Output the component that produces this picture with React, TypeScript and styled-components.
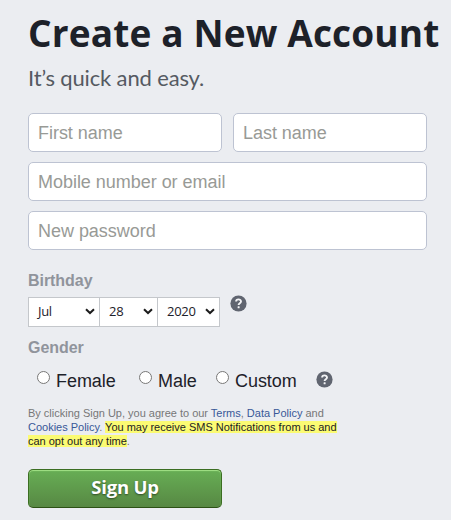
import React from "react";
import styled, { createGlobalStyle } from "styled-components";

const GlobalStyle = createGlobalStyle`
  * { box-sizing: border-box; }
  body { margin: 0; background: #ebedf1; }
`;

const Page = styled.main`
  width: 451px;
  height: 520px;
  overflow: hidden;
  padding: 8px 0 0 28px;
  background: #ebedf1;
  font-family: "Liberation Sans", Arial, sans-serif;
`;

const Title = styled.h1`
  margin: 0;
  height: 52px;
  font: 700 37px/50px "Open Sans", sans-serif;
  letter-spacing: 0.15px;
  color: #1d2129;
  white-space: nowrap;
`;

const Subtitle = styled.p`
  margin: 0;
  height: 53px;
  font: 400 22px/36px Lato, sans-serif;
  letter-spacing: -0.15px;
  color: #555a62;
  white-space: nowrap;
`;

const Fields = styled.div`
  display: grid;
  grid-template-columns: 194px 194px;
  gap: 10px 11px;
  width: 399px;
`;

const Field = styled.input<{ $wide?: boolean }>`
  grid-column: ${(p) => (p.$wide ? "1 / -1" : "auto")};
  width: 100%;
  height: 39px;
  margin: 0;
  padding: 2px 9px 0;
  border: 1px solid #bdc3d2;
  border-radius: 5px;
  background: #fff;
  font: 18px "Liberation Sans", Arial, sans-serif;
  letter-spacing: -0.03px;
  outline: none;
  &::placeholder { color: #989a96; opacity: 1; }
`;

const Label = styled.div<{ $top: number }>`
  margin-top: ${(p) => p.$top}px;
  height: 20px;
  font-size: 16px;
  line-height: 20px;
  letter-spacing: -0.05px;
  font-weight: 700;
  color: #90949c;
`;

const DateRow = styled.div`
  display: flex;
  margin-top: 6px;
  height: 30px;
`;

const DateSelect = styled.button<{ $width: number }>`
  display: flex;
  align-items: center;
  justify-content: space-between;
  width: ${(p) => p.$width}px;
  height: 30px;
  margin: 0 -1px 0 0;
  padding: 0 4px 1px 9px;
  border: 1px solid #c4c7cb;
  border-radius: 0;
  background: #fff;
  color: #1d2129;
  font: 13px/18px "Open Sans", sans-serif;
  letter-spacing: -0.3px;
`;

const HelpMark = styled.svg<{ $left: number; $top: number }>`
  flex: none;
  width: 17px;
  height: 17px;
  margin: ${(p) => p.$top}px 0 0 ${(p) => p.$left}px;
`;

const GenderRow = styled.div`
  display: flex;
  height: 37px;
  padding: 10px 0 0 9px;
`;

const Option = styled.label<{ $width: number }>`
  display: flex;
  width: ${(p) => p.$width}px;
  font-size: 18px;
  line-height: 26px;
  letter-spacing: -0.05px;
  color: #1d2129;
`;

const Radio = styled.input`
  flex: none;
  width: 13px;
  height: 13px;
  margin: 3px 6px 0 0;
`;

const Legal = styled.p`
  margin: 11px 0 0;
  width: 330px;
  font-size: 11px;
  line-height: 14px;
  letter-spacing: -0.01px;
  color: #777;
  white-space: nowrap;
`;

const Link = styled.a`
  color: #385898;
`;

const Highlight = styled.mark`
  background: #fbfb73;
  color: #222;
`;

const SubmitButton = styled.button`
  display: block;
  width: 194px;
  height: 39px;
  margin: 21px 0 0;
  padding: 0 0 3px;
  border: 1px solid #3b6e22;
  border-bottom-color: #2c5115;
  border-radius: 5px;
  background: linear-gradient(#67ae55, #578843);
  box-shadow: inset 0 1px 1px #a4e388;
  color: #fff;
  font: 700 18.5px/34px "Open Sans", sans-serif;
  letter-spacing: -0.2px;
  text-shadow: 0 1px 2px rgba(0, 0, 0, 0.5);
`;

const SelectValue = styled.span`
  padding-bottom: 1px;
`;

function Chevron() {
  return (
    <svg width="10" height="7" viewBox="0 0 10 7" fill="none">
      <path d="M1 1.2 L5 5 L9 1.2" stroke="#1c1c1c" strokeWidth="2" />
    </svg>
  );
}

function Help({ left, top }: { left: number; top: number }) {
  return (
    <HelpMark $left={left} $top={top} viewBox="0 0 17 17">
      <circle cx="8.5" cy="8.5" r="8.1" fill="#606570" />
      <path
        d="M6.1 6.6 C6.1 3.7 11 3.7 11 6.5 C11 8.3 8.6 8.2 8.6 10.1"
        fill="none"
        stroke="#f3f4f6"
        strokeWidth="1.9"
      />
      <rect x="7.6" y="11.2" width="2" height="2" rx=".5" fill="#f3f4f6" />
    </HelpMark>
  );
}

export default function App() {
  return (
    <>
      <GlobalStyle />
      <Page>
        <Title>Create a New Account</Title>
        <Subtitle>It’s quick and easy.</Subtitle>
        <Fields>
          <Field placeholder="First name" />
          <Field placeholder="Last name" />
          <Field $wide placeholder="Mobile number or email" />
          <Field $wide placeholder="New password" />
        </Fields>
        <Label $top={21}>Birthday</Label>
        <DateRow>
          <DateSelect $width={72}><SelectValue>Jul</SelectValue><Chevron /></DateSelect>
          <DateSelect $width={59}><SelectValue>28</SelectValue><Chevron /></DateSelect>
          <DateSelect $width={63}><SelectValue>2020</SelectValue><Chevron /></DateSelect>
          <Help left={10.5} top={-2} />
        </DateRow>
        <Label $top={11}>Gender</Label>
        <GenderRow>
          <Option $width={102}><Radio type="radio" name="gender" />Female</Option>
          <Option $width={77}><Radio type="radio" name="gender" />Male</Option>
          <Option $width={100}><Radio type="radio" name="gender" />Custom</Option>
          <Help left={0} top={3} />
        </GenderRow>
        <Legal>
          By clicking Sign Up, you agree to our <Link>Terms</Link>, <Link>Data Policy</Link> and
          <br />
          <Link>Cookies Policy</Link>. <Highlight>You may receive SMS Notifications from us and</Highlight>
          <br />
          <Highlight>can opt out any time</Highlight>.
        </Legal>
        <SubmitButton type="button">Sign Up</SubmitButton>
      </Page>
    </>
  );
}
